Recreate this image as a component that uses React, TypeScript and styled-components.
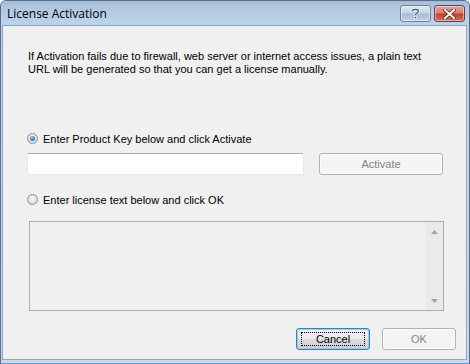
import React from "react";
import styled, { createGlobalStyle } from "styled-components";

const Global = createGlobalStyle`
  html, body { margin: 0; padding: 0; background: #ffffff; }
  body { font-family: "Liberation Sans", Arial, sans-serif; }
  * { box-sizing: border-box; }
`;

const Window = styled.div`
  width: 470px;
  height: 364px;
  display: flex;
  flex-direction: column;
  background: #bcd3ea;
  border-left: 1px solid #5a6f86;
  border-right: 1px solid #5a6f86;
  border-top: 1px solid #5a6f86;
  border-radius: 6px 6px 0 0;
  overflow: hidden;
`;

const TitleBar = styled.div`
  height: 24px;
  flex: none;
  display: flex;
  align-items: center;
  padding: 0 4px 0 6px;
  background: linear-gradient(#a6bcd6 0%, #b4cae3 40%, #bcd3ec 100%);
`;

const Title = styled.div`
  flex: 1;
  font-family: "Open Sans", "Noto Sans", sans-serif;
  font-size: 12px;
  color: #000;
  padding-top: 1px;
`;

const CaptionButtons = styled.div`
  display: flex;
  gap: 3px;
  align-self: flex-start;
  margin-top: 4px;
`;

const CaptionButton = styled.div<{ $close?: boolean }>`
  width: 31px;
  height: 17px;
  border-radius: 3px;
  border: 1px solid ${(p) => (p.$close ? "#7a3a33" : "#6d8198")};
  background: ${(p) =>
    p.$close
      ? "linear-gradient(#e6a396 0%, #d8806f 45%, #c0432f 55%, #d0735c 100%)"
      : "linear-gradient(#dde7f2 0%, #c3d3e6 45%, #a9bdd6 55%, #bfd2e8 100%)"};
  box-shadow: inset 0 0 0 1px rgba(255, 255, 255, 0.45);
  display: flex;
  align-items: center;
  justify-content: center;
`;

const Frame = styled.div`
  flex: 1;
  display: flex;
  flex-direction: column;
  padding: 0 2px 3px 1px;
  background: linear-gradient(#bcd3ec, #c5dbf1);
  border-bottom: 1px solid #3db0e0;
`;

const Client = styled.div`
  flex: 1;
  background: #f0f0f0;
  border: 1px solid #8fa6bf;
  display: flex;
  flex-direction: column;
  padding: 0 0 0 24px;
  font-size: 11px;
  color: #000;
`;

const Info = styled.p`
  margin: 24px 0 0 1px;
  line-height: 13px;
  width: 400px;
`;

const RadioRow = styled.label<{ $top: number }>`
  display: flex;
  align-items: center;
  gap: 5px;
  margin-top: ${(p) => p.$top}px;
  height: 13px;
`;

const RadioDot = styled.span<{ $checked?: boolean }>`
  width: 11px;
  height: 11px;
  border-radius: 50%;
  border: 1px solid #8e8f8f;
  background: radial-gradient(circle at 50% 40%, #f8f8f8 0%, #e0e0e0 60%, #cfcfcf 100%);
  display: flex;
  align-items: center;
  justify-content: center;
  &::after {
    content: "";
    display: ${(p) => (p.$checked ? "block" : "none")};
    width: 5px;
    height: 5px;
    border-radius: 50%;
    background: radial-gradient(circle at 40% 35%, #8fd0f5 0%, #2c8ad0 55%, #0c4d8a 100%);
  }
`;

const KeyRow = styled.div`
  display: flex;
  align-items: flex-start;
  gap: 15px;
  margin-top: 8px;
`;

const KeyInput = styled.div`
  width: 277px;
  height: 22px;
  background: #fff;
  border: 1px solid #e3e9ef;
  border-top-color: #abadb3;
  border-radius: 2px;
`;

const Button = styled.div<{ $width: number; $default?: boolean; $disabled?: boolean }>`
  width: ${(p) => p.$width}px;
  height: 22px;
  border-radius: 3px;
  border: 1px solid ${(p) => (p.$default ? "#3c7fb1" : p.$disabled ? "#adb2b5" : "#707070")};
  background: ${(p) =>
    p.$disabled
      ? "#f4f4f4"
      : "linear-gradient(#f2f2f2 0%, #ebebeb 49%, #dddddd 50%, #cfcfcf 100%)"};
  box-shadow: ${(p) => (p.$default ? "inset 0 0 0 1px #8ed3f7" : "inset 0 0 0 1px #fcfcfc")};
  color: ${(p) => (p.$disabled ? "#838383" : "#000")};
  display: flex;
  align-items: center;
  justify-content: center;
  font-size: 11px;
`;

const FocusRect = styled.span`
  border: 1px dotted #000;
  padding: 1px 0;
  width: 64px;
  height: 14px;
  display: flex;
  align-items: center;
  justify-content: center;
  line-height: 11px;
`;

const TextBox = styled.div`
  margin-top: 15px;
  margin-left: 2px;
  width: 415px;
  height: 90px;
  border: 1px solid #abadb3;
  background: #f0f0f0;
  display: flex;
  justify-content: flex-end;
`;

const ScrollBar = styled.div`
  width: 17px;
  height: 100%;
  background: #eaeaea;
  display: flex;
  flex-direction: column;
  justify-content: space-between;
  align-items: center;
  padding: 8px 0 7px;
`;

const Footer = styled.div`
  display: flex;
  justify-content: flex-end;
  gap: 12px;
  margin-top: 17px;
  padding-right: 10px;
`;

const Arrow = ({ up }: { up?: boolean }) => (
  <svg width="7" height="4" viewBox="0 0 7 4">
    <path d={up ? "M0 4 L3.5 0 L7 4 Z" : "M0 0 L3.5 4 L7 0 Z"} fill="#a3a3a3" />
  </svg>
);

export default function App() {
  return (
    <>
      <Global />
      <Window>
        <TitleBar>
          <Title>License Activation</Title>
          <CaptionButtons>
            <CaptionButton>
              <svg width="9" height="11" viewBox="0 0 9 11">
                <path
                  d="M1.5 3 C1.5 0.8 7.5 0.8 7.5 3 C7.5 5 4.5 5 4.5 7"
                  fill="none"
                  stroke="#fff"
                  strokeWidth="2.4"
                />
                <path
                  d="M1.5 3 C1.5 0.8 7.5 0.8 7.5 3 C7.5 5 4.5 5 4.5 7"
                  fill="none"
                  stroke="#3c4e66"
                  strokeWidth="1.2"
                />
                <rect x="3.3" y="8.3" width="2.4" height="2.4" fill="#3c4e66" stroke="#fff" strokeWidth="0.6" />
              </svg>
            </CaptionButton>
            <CaptionButton $close>
              <svg width="13" height="10" viewBox="0 0 13 10">
                <path d="M2 1 L11 9 M11 1 L2 9" stroke="#5a2a22" strokeWidth="3.6" strokeLinecap="square" />
                <path d="M2 1 L11 9 M11 1 L2 9" stroke="#fff" strokeWidth="2" strokeLinecap="square" />
              </svg>
            </CaptionButton>
          </CaptionButtons>
        </TitleBar>
        <Frame>
          <Client>
            <Info>
              If Activation fails due to firewall, web server or internet access issues, a plain text URL will be
              generated so that you can get a license manually.
            </Info>
            <RadioRow $top={56}>
              <RadioDot $checked />
              Enter Product Key below and click Activate
            </RadioRow>
            <KeyRow>
              <KeyInput />
              <Button $width={124} $disabled>
                Activate
              </Button>
            </KeyRow>
            <RadioRow $top={18}>
              <RadioDot />
              Enter license text below and click OK
            </RadioRow>
            <TextBox>
              <ScrollBar>
                <Arrow up />
                <Arrow />
              </ScrollBar>
            </TextBox>
            <Footer>
              <Button $width={74} $default>
                <FocusRect>Cancel</FocusRect>
              </Button>
              <Button $width={74} $disabled>
                OK
              </Button>
            </Footer>
          </Client>
        </Frame>
      </Window>
    </>
  );
}
